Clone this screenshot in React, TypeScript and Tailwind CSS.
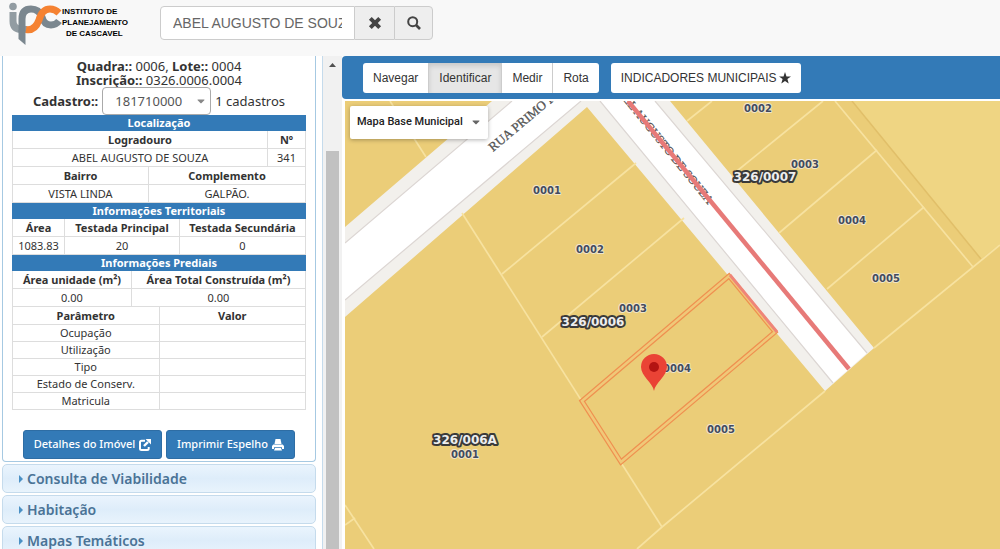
import { useState } from "react";
import { FaCaretDown } from "react-icons/fa";

const TOOLS = ["Navegar", "Identificar", "Medir", "Rota"];

const SECTIONS = ["Consulta de Viabilidade", "Habitação", "Mapas Temáticos"];

const PARAMETERS = ["Ocupação", "Utilização", "Tipo", "Estado de Conserv.", "Matricula"];

const LOT_LINES = [
  "M390 101L426 157",
  "M462 213L662 527",
  "M502 274L636 163",
  "M542 337L684 218",
  "M637 549L662 527L825 391",
  "M687 121L712 101",
  "M732 175L823 101",
  "M779 233L877 150",
  "M827 289L924 207",
  "M835 101L973 267",
  "M874 348L1000 245",
  "M345 505L374 549",
  "M345 525L355 518"
];

const LOT_LABELS = [
  { x: 547, y: 194, text: "0001" },
  { x: 590, y: 253, text: "0002" },
  { x: 633, y: 312, text: "0003" },
  { x: 677, y: 372, text: "0004" },
  { x: 721, y: 433, text: "0005" },
  { x: 465, y: 458, text: "0001" },
  { x: 758, y: 112, text: "0002" },
  { x: 805, y: 168, text: "0003" },
  { x: 852, y: 224, text: "0004" },
  { x: 886, y: 282, text: "0005" }
];

const BLOCK_LABELS = [
  { x: 593, y: 326, text: "326/0006" },
  { x: 765, y: 181, text: "326/0007" },
  { x: 465, y: 444, text: "326/006A" }
];

function RemoveIcon() {
  return (
    <svg className="size-[14px]" viewBox="0 0 12 12" aria-hidden="true">
      <path d="M2 2L10 10M10 2L2 10" stroke="currentColor" strokeWidth="3.4" />
    </svg>
  );
}

function SearchIcon() {
  return (
    <svg className="size-[14px]" viewBox="0 0 14 14" fill="none" stroke="currentColor" aria-hidden="true">
      <circle cx="5.7" cy="5.7" r="4.5" strokeWidth="2" />
      <path d="M9 9L13 13" strokeWidth="2.6" />
    </svg>
  );
}

function StarIcon() {
  return (
    <svg className="size-3" viewBox="0 0 12 12" fill="currentColor" aria-hidden="true">
      <path d="M6 0L7.5 4.4H12L8.4 7.1L9.7 11.6L6 8.9L2.3 11.6L3.6 7.1L0 4.4H4.5Z" />
    </svg>
  );
}

function OpenIcon() {
  return (
    <svg className="size-3" viewBox="0 0 12 12" fill="none" stroke="currentColor" aria-hidden="true">
      <path d="M6 1.8H2.5Q1 1.8 1 3.3V9.5Q1 11 2.5 11H8.2Q9.7 11 9.7 9.5V8" strokeWidth="2" />
      <path d="M5 7L9 3" strokeWidth="2.4" />
      <path d="M6.5 0H12V5.5Z" fill="currentColor" stroke="none" />
    </svg>
  );
}

function PrinterIcon() {
  return (
    <svg className="size-3" viewBox="0 0 12 12" fill="currentColor" aria-hidden="true">
      <path d="M3.5 0H8.5L9.5 5H2.5Z" />
      <path d="M1.3 5.5H10.7L12 7V10H10V8.3H2V10H0V7Z" />
      <path d="M3 9H9L10 11.5H2Z" />
    </svg>
  );
}

type DataTableProps = {
  columns: { label: string; width: string }[];
  values: string[];
};

function DataTable({ columns, values }: DataTableProps) {
  return (
    <table className="w-full table-fixed border-separate border-spacing-0 border-l border-[#ddd] text-center leading-4">
      <thead>
        <tr>
          {columns.map((column) => (
            <th key={column.label} className={`h-[18px] border-r border-b border-[#ddd] p-0 font-bold whitespace-nowrap ${column.width}`}>
              {column.label}
            </th>
          ))}
        </tr>
      </thead>
      <tbody>
        <tr>
          {values.map((value, index) => (
            <td key={index} className="h-[18px] border-r border-b border-[#ddd] p-0">
              {value}
            </td>
          ))}
        </tr>
      </tbody>
    </table>
  );
}

function TableTitle({ children }: { children: string }) {
  return <h3 className="h-4 bg-[#337ab7] text-center leading-4 font-bold text-white">{children}</h3>;
}

function Logo() {
  return (
    <div className="flex w-[122px] items-start">
      <svg className="h-[46px] w-[54px] shrink-0" viewBox="8 0 54 46" fill="none" aria-hidden="true">
        <circle cx="13" cy="6.5" r="3.8" fill="#929ca2" />
        <path d="M13 12V21Q13 29 21 29.5H27" stroke="#929ca2" strokeWidth="7" />
        <path d="M18.5 30H25.5V45L18.5 39Z" fill="#7b878f" />
        <path d="M22 32V19Q22 9 31 9Q39 9 42 17Q44 25 51 25Q56 25 59 21" stroke="#7b878f" strokeWidth="7" />
        <path d="M26 29.5Q35 31 39 20Q42 9 50 9Q55 9 59 13" stroke="#f58232" strokeWidth="7" />
      </svg>
      <p className="mt-[6px] -ml-2 font-['Liberation_Sans',sans-serif] text-[8px] leading-[11px] font-black whitespace-nowrap text-black">
        <span className="block pl-2">INSTITUTO DE</span>
        <span className="block pl-2">PLANEJAMENTO</span>
        <span className="block pl-3">DE CASCAVEL</span>
      </p>
    </div>
  );
}

function SearchBar() {
  const [query, setQuery] = useState("ABEL AUGUSTO DE SOUZA");

  return (
    <form className="flex h-[34px] font-['Liberation_Sans',sans-serif]" role="search" onSubmit={(event) => event.preventDefault()}>
      <input
        aria-label="Pesquisar endereço"
        className="w-[195px] rounded-l border border-[#ccc] bg-white px-3 text-sm text-[#666] outline-none"
        type="text"
        value={query}
        onChange={(event) => setQuery(event.target.value)}
      />
      <button aria-label="Limpar" className="flex w-[39px] items-center justify-center border-y border-[#ccc] bg-[#eee] text-[#444]" type="button" onClick={() => setQuery("")}>
        <RemoveIcon />
      </button>
      <button aria-label="Buscar" className="flex w-[39px] items-center justify-center rounded-r border border-[#ccc] bg-[#eee] text-[#444]" type="submit">
        <SearchIcon />
      </button>
    </form>
  );
}

function PropertyPanel() {
  return (
    <div className="rounded-b border border-t-0 border-[#a6c9e2] bg-white px-[9px] pb-[2px] text-[11px] text-[#333]">
      <div className="text-center text-[13px] leading-[14px]">
        <p className="pt-[3px]">
          <b>Quadra::</b> 0006, <b>Lote::</b> 0004
        </p>
        <p>
          <b>Inscrição::</b> 0326.0006.0004
        </p>
        <div className="flex h-[28px] items-center justify-center gap-1">
          <label className="font-bold" htmlFor="cadastro">
            Cadastro::
          </label>
          <span className="relative">
            <select id="cadastro" className="h-7 w-[109px] appearance-none rounded border border-[#aaa] bg-white pl-3 text-[#555]" defaultValue="181710000">
              <option>181710000</option>
            </select>
            <FaCaretDown className="pointer-events-none absolute top-2 right-1 size-3 text-[#888]" />
          </span>
          <span>1 cadastros</span>
        </div>
      </div>

      <TableTitle>Localização</TableTitle>
      <DataTable
        columns={[
          { label: "Logradouro", width: "w-[255px]" },
          { label: "Nº", width: "" }
        ]}
        values={["ABEL AUGUSTO DE SOUZA", "341"]}
      />
      <DataTable
        columns={[
          { label: "Bairro", width: "w-[136px]" },
          { label: "Complemento", width: "" }
        ]}
        values={["VISTA LINDA", "GALPÃO."]}
      />
      <TableTitle>Informações Territoriais</TableTitle>
      <DataTable
        columns={[
          { label: "Área", width: "w-[52px]" },
          { label: "Testada Principal", width: "w-[115px]" },
          { label: "Testada Secundária", width: "" }
        ]}
        values={["1083.83", "20", "0"]}
      />
      <TableTitle>Informações Prediais</TableTitle>
      <DataTable
        columns={[
          { label: "Área unidade (m²)", width: "w-[119px]" },
          { label: "Área Total Construída (m²)", width: "" }
        ]}
        values={["0.00", "0.00"]}
      />
      <table className="w-full table-fixed border-separate border-spacing-0 border-l border-[#ddd] text-center leading-4">
        <thead>
          <tr>
            <th className="h-[18px] border-r border-b border-[#ddd] p-0">Parâmetro</th>
            <th className="h-[18px] border-r border-b border-[#ddd] p-0">Valor</th>
          </tr>
        </thead>
        <tbody>
          {PARAMETERS.map((parameter) => (
            <tr key={parameter}>
              <td className="h-[17px] border-r border-b border-[#ddd] p-0">{parameter}</td>
              <td className="h-[17px] border-r border-b border-[#ddd] p-0" />
            </tr>
          ))}
        </tbody>
      </table>

      <div className="mt-5 flex justify-center gap-1 font-medium text-white">
        <button className="flex h-[29px] w-[139px] items-center justify-center gap-1 rounded-[3px] border border-[#2e6da4] bg-[#337ab7]" type="button">
          Detalhes do Imóvel <OpenIcon />
        </button>
        <button className="flex h-[29px] w-[129px] items-center justify-center gap-1 rounded-[3px] border border-[#2e6da4] bg-[#337ab7]" type="button">
          Imprimir Espelho <PrinterIcon />
        </button>
      </div>
    </div>
  );
}

function CityMap() {
  return (
    <svg className="absolute inset-0 h-full w-full" viewBox="345 101 655 448" preserveAspectRatio="xMinYMin slice" role="img" aria-label="Mapa de lotes">
      <rect x="345" y="101" width="655" height="448" fill="#ebcd78" />
      <path d="M852 101L981 259L1000 244V101Z" fill="#efd583" />
      <path d="M852 101L981 259" stroke="#e1bf69" strokeWidth="1.5" />

      <path d="M345 227L492 101H670L874 348L825 391L587 107L345 317Z" fill="#f2f0ec" />
      <path d="M345 243L512 101H581L345 300Z" fill="#fff" />
      <path d="M600 101H655L867 353L833 383Z" fill="#fff" />
      <path d="M345 243L512 101M581 101L345 300M600 101L833 383M655 101L867 353" stroke="#dcd6d3" strokeWidth="1.2" fill="none" />

      {LOT_LINES.map((line) => (
        <path key={line} d={line} stroke="#f7e2a0" strokeWidth="1.7" fill="none" />
      ))}

      <g fontFamily="'Liberation Serif', serif" fill="#555" stroke="#555" strokeWidth=".3">
        <text fontSize="13" transform="translate(493 152) rotate(-40)">
          RUA PRIMO P
        </text>
        <text fontSize="12" textAnchor="end" transform="translate(708 205) rotate(51)">
          ABEL AUGUSTO DE SOUZA
        </text>
      </g>
      <path d="M628 101L849 369" stroke="#e77a78" strokeWidth="4.5" />

      <path d="M729 276L775 332L621 462L582 401Z" fill="none" stroke="#ef9050" strokeWidth="5" />
      <path d="M729 276L775 332L621 462L582 401Z" fill="none" stroke="#f0c878" strokeWidth="2.5" />
      <path d="M730 275L777 332" stroke="#ef8578" strokeWidth="3" />

      <g fontFamily="'DejaVu Sans', sans-serif" fontWeight="bold" textAnchor="middle" paintOrder="stroke" strokeLinejoin="round">
        {LOT_LABELS.map((label) => (
          <text key={`${label.x}-${label.y}`} x={label.x} y={label.y} fontSize="10" fill="#434b5e" stroke="#f0e6cc" strokeWidth="2">
            {label.text}
          </text>
        ))}
        {BLOCK_LABELS.map((label) => (
          <text key={label.text} x={label.x} y={label.y} fontSize="12" fill="#eee" stroke="#3a3a3a" strokeWidth="4">
            {label.text}
          </text>
        ))}
      </g>

      <path d="M654 391C653 383 641 376 641 367A13 13 0 0 1 667 367C667 376 655 383 654 391Z" fill="#ea4335" />
      <circle cx="654" cy="367" r="5" fill="#b31412" />
    </svg>
  );
}

export default function App() {
  const [tool, setTool] = useState("Identificar");

  return (
    <div className="flex h-screen flex-col overflow-hidden bg-white font-['Noto_Sans',sans-serif]">
      <header className="flex h-14 shrink-0 items-start gap-[30px] bg-[#f8f8f8] pl-2">
        <Logo />
        <div className="mt-[6px]">
          <SearchBar />
        </div>
      </header>

      <div className="flex min-h-0 flex-1">
        <aside className="w-[323px] shrink-0 overflow-hidden border-r border-[#c5dbec] pr-[6px] pl-[2px]">
          <PropertyPanel />
          {SECTIONS.map((section) => (
            <button
              key={section}
              className="mt-[2px] flex h-[29px] w-full items-center gap-1 rounded-[5px] border border-[#c5dbec] bg-linear-to-b from-[#eaf4fd] via-[#deedfa] to-[#e8f3fc] pl-4 text-sm font-semibold text-[#4a7396]"
              type="button"
            >
              <svg className="h-2 w-1" viewBox="0 0 4 8" aria-hidden="true">
                <path d="M0 0L4 4L0 8Z" fill="#4a90c4" />
              </svg>
              {section}
            </button>
          ))}
        </aside>

        <div className="flex w-[19px] shrink-0 flex-col items-center bg-[#f1f1f1] pt-[7px]" aria-hidden="true">
          <svg className="h-1 w-[7px]" viewBox="0 0 7 4">
            <path d="M0 4L3.5 0L7 4Z" fill="#505050" />
          </svg>
          <div className="mt-[84px] w-[13px] flex-1 bg-[#c1c1c1]" />
        </div>

        <main className="flex min-w-0 flex-1 flex-col">
          <div className="flex h-[43px] shrink-0 items-center gap-3 rounded-l bg-[#337ab7] pl-[21px] font-['Liberation_Sans',sans-serif] text-xs text-[#333]">
            <div className="flex h-[30px] divide-x divide-[#ccc] overflow-hidden rounded-[3px] bg-white">
              {TOOLS.map((name) => (
                <button
                  key={name}
                  aria-pressed={tool === name}
                  className={name === tool ? "bg-[#e6e6e6] px-[10px] shadow-[inset_0_3px_5px_rgba(0,0,0,0.125)]" : "px-[10px]"}
                  type="button"
                  onClick={() => setTool(name)}
                >
                  {name}
                </button>
              ))}
            </div>
            <button className="flex h-[30px] items-center gap-[2px] rounded-[3px] bg-white px-[10px]" type="button">
              INDICADORES MUNICIPAIS <StarIcon />
            </button>
          </div>

          <div className="relative mt-[2px] ml-[3px] min-h-0 flex-1">
            <CityMap />
            <span className="absolute top-[5px] left-[5px] font-['Roboto',sans-serif]">
              <select
                aria-label="Mapa base"
                className="h-[33px] w-[138px] appearance-none rounded-[2px] bg-white pl-[7px] text-[11px] font-medium text-[#222] shadow-[0_1px_4px_rgba(0,0,0,0.3)]"
                defaultValue="Mapa Base Municipal"
              >
                <option>Mapa Base Municipal</option>
              </select>
              <FaCaretDown className="pointer-events-none absolute top-[10px] right-[6px] size-3 text-[#666]" />
            </span>
          </div>
        </main>
      </div>
    </div>
  );
}
